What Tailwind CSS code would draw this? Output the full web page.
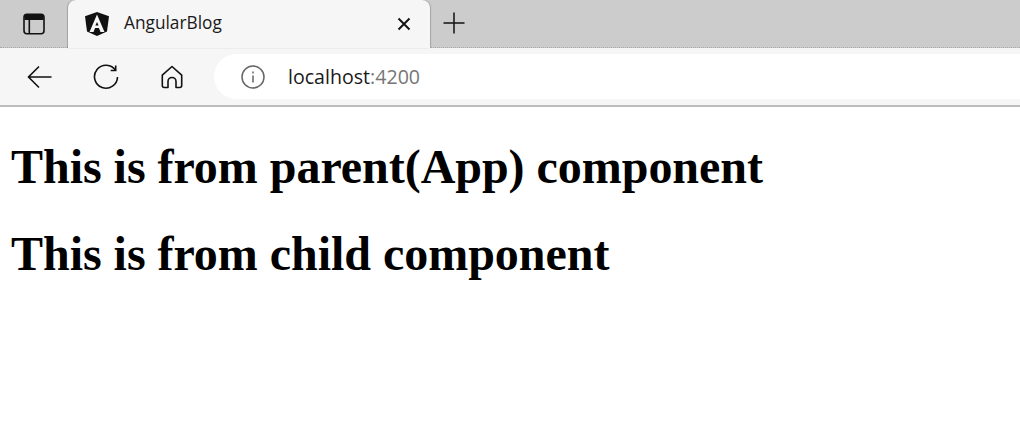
<!DOCTYPE html>
<html lang="en">
<head>
  <meta charset="UTF-8">
  <script src="https://cdn.jsdelivr.net/npm/@tailwindcss/browser@4"></script>
  <title>AngularBlog</title>
</head>
<body class="bg-white h-[442px] w-[1020px] overflow-hidden font-['Open_Sans',sans-serif]">
  <!-- tab strip -->
  <div class="h-[48px] bg-[#cccccc] flex items-stretch border-b border-dotted border-[#a8a8a8]">
    <div class="w-[68px] flex items-center justify-center">
      <svg width="24" height="24" viewBox="0 0 24 24" fill="none" stroke="#111" stroke-width="1.6">
        <rect x="2" y="2.2" width="20" height="19.6" rx="3"/>
        <path d="M2.5 3h19v5h-19z" fill="#111" stroke="none"/>
        <path d="M7.3 8v13.5"/>
      </svg>
    </div>
    <div class="w-[362px] bg-[#f6f6f6] rounded-t-lg shadow-[1px_0_1px_rgba(0,0,0,0.2),-1px_0_1px_rgba(0,0,0,0.2)] flex items-center pl-[16px] pr-[19px] -mb-px">
      <svg width="26" height="26" viewBox="0 0 26 26">
        <path d="M13 1 1 5.2l2 15.3L13 25l10-4.5 2-15.3z" fill="#111"/>
        <path d="M13 3.5 5.5 21h4l1.6-4h3.8l1.6 4h4zm0 7.5 1.6 3.4h-3.2z" fill="#f6f6f6" fill-rule="evenodd"/>
      </svg>
      <span class="ml-[14px] mb-[2px] text-[17.3px] text-[#1a1a1a] leading-none flex-1">AngularBlog</span>
      <svg width="14" height="14" viewBox="0 0 14 14" stroke="#111" stroke-width="1.9" fill="none">
        <path d="M1.5 1.5l11 11M12.5 1.5l-11 11"/>
      </svg>
    </div>
    <div class="ml-[13px] flex items-center">
      <svg class="mb-[2px]" width="22" height="22" viewBox="0 0 22 22" stroke="#111" stroke-width="1.5" fill="none">
        <path d="M11 .5v21M.5 11h21"/>
      </svg>
    </div>
  </div>
  <!-- toolbar -->
  <div class="h-[59px] bg-[#f6f6f6] border-b-2 border-[#bcbcbc] flex items-center pl-[27px]">
    <svg width="26" height="24" viewBox="0 0 26 24" stroke="#111" stroke-width="1.6" fill="none">
      <path d="M1.5 12h23M12 1.5 1.5 12 12 22.5"/>
    </svg>
    <svg class="ml-[40px]" width="26" height="26" viewBox="0 0 26 26" stroke="#111" stroke-width="1.6" fill="none">
      <path d="M22.7 6.5A11.5 11.5 0 1 0 24.5 13"/>
      <path d="M22.7 1.5v5h-5"/>
    </svg>
    <svg class="ml-[41px]" width="24" height="24" viewBox="0 0 24 24" stroke="#111" stroke-width="1.6" fill="none" stroke-linejoin="round">
      <path d="M12 1.5 2.3 10.2v10.3a2 2 0 0 0 2 2h3.7v-6a4 4 0 0 1 8 0v6h3.7a2 2 0 0 0 2-2V10.2z"/>
    </svg>
    <div class="ml-[30px] flex-1 h-[45px] bg-white rounded-l-[23px] flex items-center pl-[27px]">
      <svg width="24" height="24" viewBox="0 0 24 24" fill="none" stroke="#666" stroke-width="1.5">
        <circle cx="12" cy="12" r="11"/>
        <path d="M12 10.5v7M12 6.5v2"/>
      </svg>
      <span class="ml-[23px] text-[19.6px] text-[#1a1a1a] leading-none">localhost<span class="text-[#767676]">:4200</span></span>
    </div>
  </div>
  <!-- page content -->
  <main class="pl-[11px] font-['Liberation_Serif',serif] text-black tracking-[-0.03px]">
    <h1 class="mt-[32px] text-[48px] font-bold leading-[55px]">This is from parent(App) component</h1>
    <h1 class="mt-[32px] text-[48px] font-bold leading-[55px]">This is from child component</h1>
  </main>
</body>
</html>
